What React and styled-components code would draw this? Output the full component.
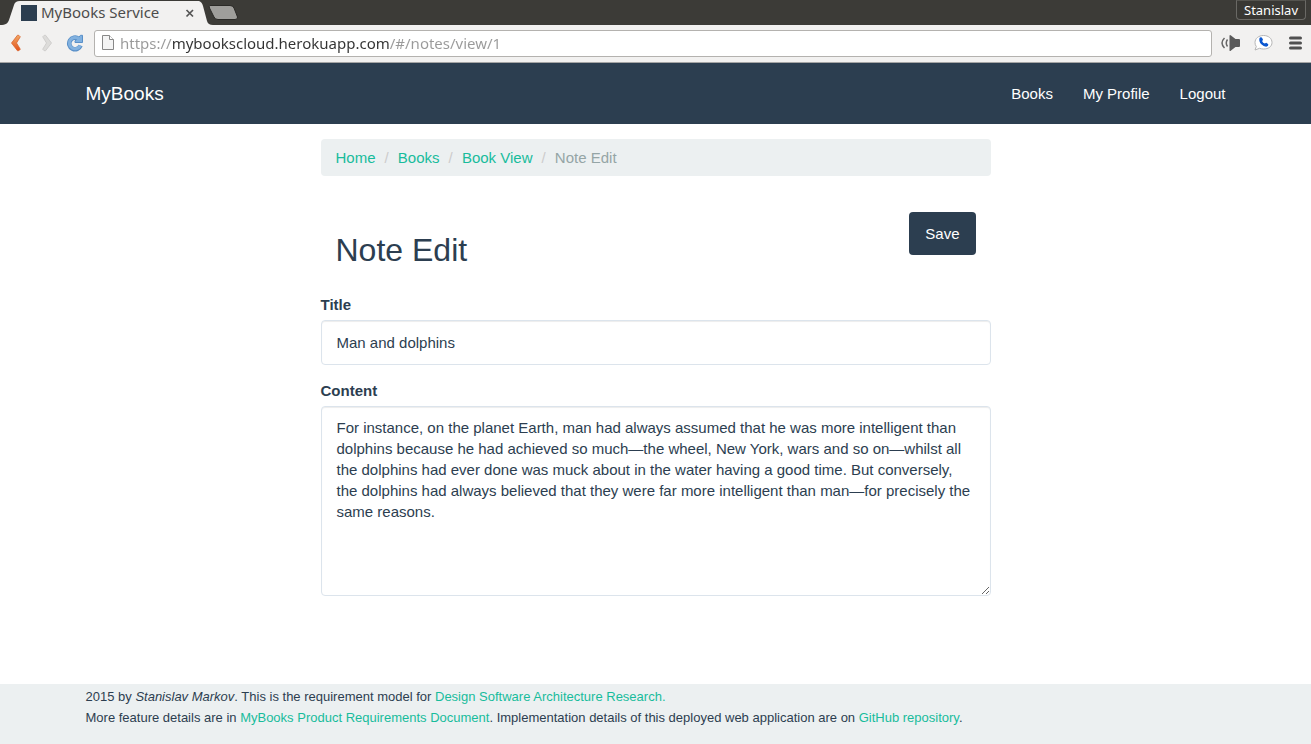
import React from "react";
import styled, { createGlobalStyle } from "styled-components";

const navy = "#2c3e50";
const teal = "#18bc9c";
const pale = "#ecf0f1";
const uiFont = '"Noto Sans", "Open Sans", sans-serif';
const pageFont = '"Liberation Sans", Arial, sans-serif';

const GlobalStyle = createGlobalStyle`
  *, *::before, *::after { box-sizing: border-box; }
  body {
    margin: 0;
    background: #fff;
    color: ${navy};
    font: 15px/21px ${pageFont};
  }
  input, textarea, button { font: inherit; }
`;

const Window = styled.div`
  display: flex;
  flex-direction: column;
  min-height: 100vh;
`;

/* Browser frame */
const TabStrip = styled.div`
  display: flex;
  justify-content: space-between;
  height: 25px;
  background: #3c3b37;
  font-family: ${uiFont};
`;

const Tabs = styled.div`
  display: flex;
  align-items: flex-end;
`;

const TabEdge = styled.svg`
  display: block;
  flex: none;
`;

const Tab = styled.div`
  display: flex;
  align-items: center;
  gap: 4px;
  width: 178px;
  height: 24px;
  padding: 0 3px 1px 0;
  background: #f2f1f0;
  color: #4c4c4c;
  font-size: 15px;
`;

const Favicon = styled.span`
  width: 16px;
  height: 16px;
  background: ${navy};
`;

const TabTitle = styled.span`
  flex: 1;
  white-space: nowrap;
`;

const IconButton = styled.button`
  display: flex;
  align-items: center;
  justify-content: center;
  flex: none;
  padding: 0;
  border: 0;
  background: none;
  cursor: pointer;
`;

const NewTabButton = styled(IconButton)`
  align-self: center;
  margin-left: -6px;
`;

const UserButton = styled.button`
  height: 20px;
  margin-right: 5px;
  padding: 0 7px;
  border: 1px solid #6a6965;
  border-top-color: #55544f;
  border-radius: 0 0 4px 4px;
  background: #393834;
  color: #fff;
  font-size: 13px;
  line-height: 18px;
`;

const Toolbar = styled.div`
  display: flex;
  align-items: center;
  gap: 14px;
  height: 38px;
  padding: 0 8px 1px;
  border-bottom: 1px solid #a5a5a5;
  background: #f2f1f0;
`;

const ToolGroup = styled.div`
  display: flex;
  align-items: center;
  gap: ${(p) => p.$gap}px;
`;

const AddressBar = styled.label`
  display: flex;
  align-items: center;
  flex: 1;
  gap: 5px;
  height: 27px;
  margin: 0 -5px 0 -4px;
  padding: 0 6px;
  border: 1px solid #b4b2af;
  border-radius: 3px;
  background: #fff;
`;

/* The host name is darker than the rest of the address. */
const AddressInput = styled.input`
  flex: 1;
  min-width: 0;
  padding: 0;
  border: 0;
  outline: 0;
  background: linear-gradient(to right, #999 52px, #333 52px 270px, #999 270px);
  background-clip: text;
  -webkit-background-clip: text;
  color: transparent;
  font: 15px/24px ${uiFont};
`;

/* Application */
const Container = styled.div`
  width: 100%;
  max-width: 1170px;
  margin: 0 auto;
  padding: 0 15px;
`;

const Navbar = styled.header`
  background: ${navy};
`;

const NavRow = styled(Container)`
  display: flex;
  align-items: center;
  justify-content: space-between;
  height: 61px;
`;

const Brand = styled.a`
  color: #fff;
  font-size: 19px;
  text-decoration: none;
`;

const NavLinks = styled.nav`
  display: flex;
  gap: 30px;
`;

const NavLink = styled.a`
  color: #fff;
  text-decoration: none;
`;

const Main = styled.main`
  flex: 1;
  width: 100%;
  max-width: 700px;
  margin: 0 auto;
  padding: 15px 15px 60px;
`;

const Breadcrumb = styled.ol`
  display: flex;
  margin: 0;
  padding: 8px 15px;
  border-radius: 4px;
  background: ${pale};
  list-style: none;
`;

const Crumb = styled.li`
  color: #95a5a6;
  & + &::before {
    content: "/\\00a0";
    padding: 0 5px 0 9px;
    color: #ccc;
  }
`;

const TextLink = styled.a`
  color: ${teal};
  text-decoration: none;
`;

const TitleRow = styled.div`
  display: flex;
  align-items: flex-start;
  justify-content: space-between;
  margin: 36px 0 26px;
  padding: 0 15px;
`;

const Heading = styled.h2`
  margin: 21px 0 0;
  font-size: 32px;
  font-weight: 400;
  line-height: 35px;
`;

const SaveButton = styled.button`
  padding: 11px 16px;
  border: 0;
  border-radius: 4px;
  background: ${navy};
  color: #fff;
  cursor: pointer;
`;

const Field = styled.div`
  margin-bottom: 15px;
`;

const FieldLabel = styled.label`
  display: block;
  margin-bottom: 5px;
  font-weight: 700;
`;

const TextField = styled.input`
  display: block;
  width: 100%;
  height: 45px;
  padding: 10px 15px;
  border: 1px solid #dce4ec;
  border-radius: 4px;
  background: #fff;
  box-shadow: inset 0 1px 1px rgba(0, 0, 0, 0.075);
  color: ${navy};
  outline: 0;
`;

const TextArea = styled(TextField)`
  height: 190px;
  resize: vertical;
`;

const Footer = styled.footer`
  height: 60px;
  padding-top: 2px;
  background: ${pale};
  font-size: 13px;
`;

const FooterLine = styled.p`
  margin: 0;
`;

const note =
  "For instance, on the planet Earth, man had always assumed that he was more intelligent than dolphins because he had achieved so much—the wheel, New York, wars and so on—whilst all the dolphins had ever done was muck about in the water having a good time. But conversely, the dolphins had always believed that they were far more intelligent than man—for precisely the same reasons.";

function BrowserFrame() {
  return (
    <>
      <TabStrip>
        <Tabs>
          <TabEdge width="21" height="24" viewBox="0 0 21 24">
            <path d="M0 24C6 24 8 22 9 19L14 4Q15 0 20 0H21V24Z" fill="#f2f1f0" />
          </TabEdge>
          <Tab>
            <Favicon />
            <TabTitle>MyBooks Service</TabTitle>
            <IconButton aria-label="Close tab">
              <svg width="12" height="12" viewBox="0 0 12 12">
                <path d="M2.5 3L9 9.5M9 3L2.5 9.5" stroke="#555" strokeWidth="1.7" />
              </svg>
            </IconButton>
          </Tab>
          <TabEdge width="14" height="24" viewBox="0 0 14 24">
            <path d="M0 24V0Q3 1 4 5L8 20Q9 24 14 24Z" fill="#f2f1f0" />
          </TabEdge>
          <NewTabButton aria-label="New tab">
            <svg width="32" height="15" viewBox="0 0 32 15">
              <path d="M3 .5H23Q26 .5 27 3L30.500 12Q31 14.500 28 14.500H11Q8 14.500 7 12L2.500 3Q1.500 .5 3 .5Z" fill="#9f9e9b" stroke="#2b2a27" />
            </svg>
          </NewTabButton>
        </Tabs>
        <UserButton>Stanislav</UserButton>
      </TabStrip>
      <Toolbar>
        <ToolGroup $gap={12}>
          <IconButton aria-label="Back">
            <svg width="16" height="18" viewBox="0 0 16 18">
              <defs>
                <linearGradient id="back" x2="0" y2="1">
                  <stop stopColor="#f2aa66" />
                  <stop offset="1" stopColor="#e2501a" />
                </linearGradient>
              </defs>
              <path d="M9.500 1.200Q11 .8 12.300 2.800L8.500 9L12.300 15.200Q11 17.200 9.500 16.800L3.500 9Z" fill="url(#back)" stroke="#d9652f" strokeWidth=".8" strokeLinejoin="round" />
            </svg>
          </IconButton>
          <IconButton aria-label="Forward">
            <svg width="18" height="18" viewBox="0 0 18 18">
              <path d="M9.500 1.200Q8 .8 6.700 2.800L10.500 9L6.700 15.200Q8 17.200 9.500 16.800L15.500 9Z" fill="#dddcda" stroke="#c9c8c6" strokeWidth=".8" strokeLinejoin="round" />
            </svg>
          </IconButton>
          <IconButton aria-label="Reload">
            <svg width="18" height="18" viewBox="0 0 18 18">
              <path d="M14.500 11.500A5.800 5.800 0 1 1 12.500 4.800" fill="none" stroke="#5a90c8" strokeWidth="4.600" />
              <path d="M16.500 1.300V8.500H9V6.800L11.500 4.800L14.500 1.300Z" fill="#7fb0e0" stroke="#5a90c8" strokeLinejoin="round" />
              <path d="M14.200 11.500A5.700 5.700 0 1 1 13 5" fill="none" stroke="#82b1df" strokeWidth="3" />
            </svg>
          </IconButton>
        </ToolGroup>
        <AddressBar>
          <svg width="14" height="16" viewBox="0 0 14 16">
            <path d="M1.500 .5H8.500L12.500 4.500V14.500H1.500Z" fill="#f4f4f4" stroke="#888" />
            <path d="M8.500 .5V4.500H12.500" fill="#fff" stroke="#888" />
          </svg>
          <AddressInput aria-label="Address" defaultValue="https://mybookscloud.herokuapp.com/#/notes/view/1" />
        </AddressBar>
        <ToolGroup $gap={13}>
          <IconButton aria-label="Sound">
            <svg width="20" height="18" viewBox="0 0 20 18">
              <path d="M8.500 1.500Q9 .5 10 1.500L14.500 5H18Q19 5 19 6V12Q19 13 18 13H14.500L10 16.500Q9 17.500 8.500 16.500Z" fill="#5a5a5a" />
              <path d="M6.500 5.500Q4 9 6.500 12.500M3.500 4Q-1.500 9 3.500 14" fill="none" stroke="#666" strokeWidth="1.500" />
            </svg>
          </IconButton>
          <IconButton aria-label="Call">
            <svg width="20" height="18" viewBox="0 0 20 18">
              <path d="M9.500 1.500C14.500 1.500 18 4.500 18 8.500S14.500 15 9.500 15Q7.500 15 5.500 14.300L1 16L2.300 12.500Q1 11 1 8.500C1 4.500 4.500 1.500 9.500 1.500Z" fill="#fff" stroke="#b5b5b5" />
              <path d="M5.500 4Q6.500 2.600 7.800 3.600L9 5.500L8.200 7.300Q8.800 9 10.800 9.600L12.300 8.700L14.300 10.200Q14.500 12 12.800 12.600Q10 13 7.300 10.300T5.500 4Z" fill="#0b57d0" />
            </svg>
          </IconButton>
          <IconButton aria-label="Menu">
            <svg width="16" height="14" viewBox="0 0 16 14">
              <path d="M3.500 2H13.500M3.500 7H13.500M3.500 12H13.500" stroke="#505050" strokeWidth="3" strokeLinecap="round" />
            </svg>
          </IconButton>
        </ToolGroup>
      </Toolbar>
    </>
  );
}

export default function App() {
  return (
    <Window>
      <GlobalStyle />
      <BrowserFrame />
      <Navbar>
        <NavRow>
          <Brand href="#/">MyBooks</Brand>
          <NavLinks>
            <NavLink href="#/books">Books</NavLink>
            <NavLink href="#/profile">My Profile</NavLink>
            <NavLink href="#/logout">Logout</NavLink>
          </NavLinks>
        </NavRow>
      </Navbar>
      <Main>
        <Breadcrumb>
          <Crumb><TextLink href="#/">Home</TextLink></Crumb>
          <Crumb><TextLink href="#/books">Books</TextLink></Crumb>
          <Crumb><TextLink href="#/books/view/1">Book View</TextLink></Crumb>
          <Crumb>Note Edit</Crumb>
        </Breadcrumb>
        <form onSubmit={(e) => e.preventDefault()}>
          <TitleRow>
            <Heading>Note Edit</Heading>
            <SaveButton type="submit">Save</SaveButton>
          </TitleRow>
          <Field>
            <FieldLabel htmlFor="title">Title</FieldLabel>
            <TextField id="title" type="text" defaultValue="Man and dolphins" />
          </Field>
          <Field>
            <FieldLabel htmlFor="content">Content</FieldLabel>
            <TextArea as="textarea" id="content" defaultValue={note} />
          </Field>
        </form>
      </Main>
      <Footer>
        <Container>
          <FooterLine>
            2015 by <em>Stanislav Markov</em>. This is the requirement model for{" "}
            <TextLink href="#/research">Design Software Architecture Research.</TextLink>
          </FooterLine>
          <FooterLine>
            More feature details are in <TextLink href="#/requirements">MyBooks Product Requirements Document</TextLink>.
            Implementation details of this deployed web application are on{" "}
            <TextLink href="#/repository">GitHub repository</TextLink>.
          </FooterLine>
        </Container>
      </Footer>
    </Window>
  );
}
